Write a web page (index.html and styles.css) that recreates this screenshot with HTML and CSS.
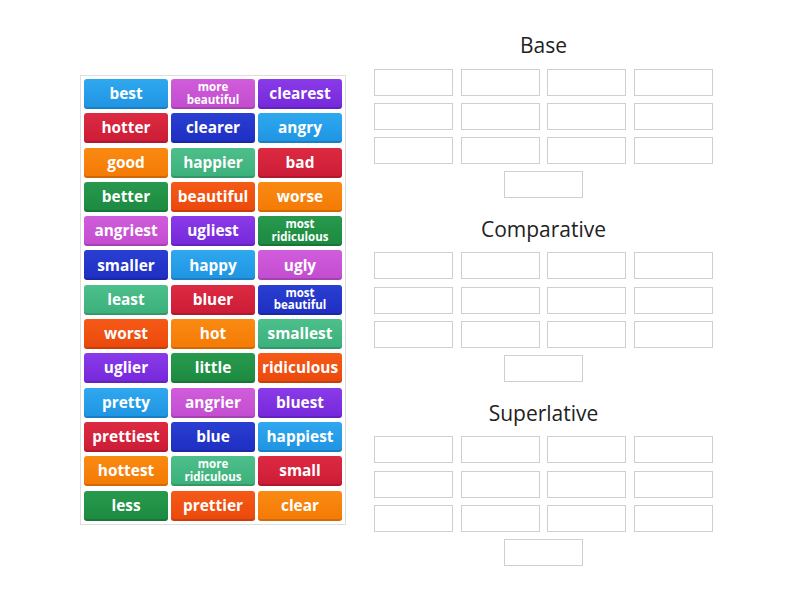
FILE: index.html
```html
<!DOCTYPE html>
<html>
<head>
<meta charset="utf-8">
<link rel="stylesheet" href="styles.css">
</head>
<body>
<div class="page">
  <div class="bank">
    <div class="tile c-blue">best</div>
    <div class="tile c-magenta small">more beautiful</div>
    <div class="tile c-purple">clearest</div>
    <div class="tile c-red">hotter</div>
    <div class="tile c-navy">clearer</div>
    <div class="tile c-blue">angry</div>
    <div class="tile c-orange">good</div>
    <div class="tile c-green">happier</div>
    <div class="tile c-red">bad</div>
    <div class="tile c-dgreen">better</div>
    <div class="tile c-ored">beautiful</div>
    <div class="tile c-orange">worse</div>
    <div class="tile c-magenta">angriest</div>
    <div class="tile c-purple">ugliest</div>
    <div class="tile c-dgreen small">most ridiculous</div>
    <div class="tile c-navy">smaller</div>
    <div class="tile c-blue">happy</div>
    <div class="tile c-magenta">ugly</div>
    <div class="tile c-green">least</div>
    <div class="tile c-red">bluer</div>
    <div class="tile c-navy small">most beautiful</div>
    <div class="tile c-ored">worst</div>
    <div class="tile c-orange">hot</div>
    <div class="tile c-green">smallest</div>
    <div class="tile c-purple">uglier</div>
    <div class="tile c-dgreen">little</div>
    <div class="tile c-ored">ridiculous</div>
    <div class="tile c-blue">pretty</div>
    <div class="tile c-magenta">angrier</div>
    <div class="tile c-purple">bluest</div>
    <div class="tile c-red">prettiest</div>
    <div class="tile c-navy">blue</div>
    <div class="tile c-blue">happiest</div>
    <div class="tile c-orange">hottest</div>
    <div class="tile c-green small">more ridiculous</div>
    <div class="tile c-red">small</div>
    <div class="tile c-dgreen">less</div>
    <div class="tile c-ored">prettier</div>
    <div class="tile c-orange">clear</div>
  </div>
  <div class="groups">
    <section class="group">
      <h2 class="title">Base</h2>
      <div class="slots">
        <div class="slot"></div><div class="slot"></div><div class="slot"></div><div class="slot"></div>
        <div class="slot"></div><div class="slot"></div><div class="slot"></div><div class="slot"></div>
        <div class="slot"></div><div class="slot"></div><div class="slot"></div><div class="slot"></div>
        <div class="slot"></div>
      </div>
    </section>
    <section class="group">
      <h2 class="title">Comparative</h2>
      <div class="slots">
        <div class="slot"></div><div class="slot"></div><div class="slot"></div><div class="slot"></div>
        <div class="slot"></div><div class="slot"></div><div class="slot"></div><div class="slot"></div>
        <div class="slot"></div><div class="slot"></div><div class="slot"></div><div class="slot"></div>
        <div class="slot"></div>
      </div>
    </section>
    <section class="group">
      <h2 class="title">Superlative</h2>
      <div class="slots">
        <div class="slot"></div><div class="slot"></div><div class="slot"></div><div class="slot"></div>
        <div class="slot"></div><div class="slot"></div><div class="slot"></div><div class="slot"></div>
        <div class="slot"></div><div class="slot"></div><div class="slot"></div><div class="slot"></div>
        <div class="slot"></div>
      </div>
    </section>
  </div>
</div>
</body>
</html>
```

FILE: styles.css
```css
html, body {
  margin: 0;
  padding: 0;
  background: #ffffff;
  font-family: "Open Sans", "Noto Sans", "Liberation Sans", sans-serif;
}

.page {
  display: flex;
  align-items: flex-start;
  gap: 28px;
  padding-left: 80px;
  width: 800px;
  height: 600px;
  box-sizing: border-box;
}

.bank {
  margin-top: 75px;
  border: 1px solid #dedede;
  padding: 3px;
  display: grid;
  grid-template-columns: repeat(3, 84px);
  grid-auto-rows: 30px;
  column-gap: 3px;
  row-gap: 4.3px;
}

.tile {
  display: flex;
  align-items: center;
  justify-content: center;
  text-align: center;
  color: #ffffff;
  font-weight: 700;
  font-size: 15.4px;
  line-height: 1;
  padding-bottom: 0.5px;
  box-sizing: border-box;
  border-radius: 3px;
  box-shadow: inset 0 -2px 0 rgba(0, 0, 0, 0.14);
  white-space: nowrap;
}

.tile.small {
  font-size: 11.5px;
  line-height: 12.5px;
  white-space: normal;
  padding: 0 4px 1px 4px;
}

.c-blue { background: linear-gradient(#2fa8ef, #1f94e2); }
.c-magenta { background: linear-gradient(#d05ddb, #c24ccf); }
.c-purple { background: linear-gradient(#8a3be8, #7528db); }
.c-red { background: linear-gradient(#dc2a42, #cc1c35); }
.c-navy { background: linear-gradient(#2a3fd2, #1e2ec2); }
.c-orange { background: linear-gradient(#fa8a12, #f47a04); }
.c-green { background: linear-gradient(#4cbf8a, #3cb07a); }
.c-dgreen { background: linear-gradient(#27994d, #1c8a40); }
.c-ored { background: linear-gradient(#f65a17, #ea480b); }

.groups {
  width: 339px;
  display: flex;
  flex-direction: column;
  padding-top: 30px;
  gap: 15.5px;
}

.title {
  margin: 0 0 8.5px 0;
  height: 30px;
  line-height: 30px;
  font-size: 21px;
  font-weight: 400;
  color: #222222;
  text-align: center;
}

.slots {
  display: flex;
  flex-wrap: wrap;
  justify-content: center;
  column-gap: 7.66px;
  row-gap: 7.3px;
}

.slot {
  width: 79px;
  height: 27px;
  box-sizing: border-box;
  border: 1.5px solid #cfcfcf;
}
```
